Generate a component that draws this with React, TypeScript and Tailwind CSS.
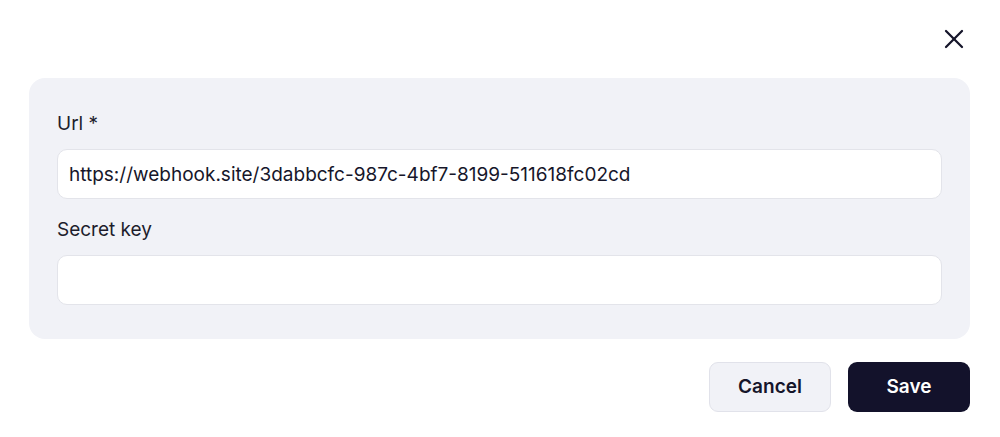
import { X } from "lucide-react";

const Field = ({ label, value }: { label: string; value?: string }) => (
  <div className="flex flex-col">
    <label className="text-[19px] leading-7 text-[#1d1d2c] mb-[11px]">{label}</label>
    <input
      readOnly
      value={value ?? ""}
      className="h-[50px] w-full rounded-[10px] border border-[#e3e4ea] bg-white px-[11px] text-[19px] text-[#16162a] outline-none"
    />
  </div>
);

const App = () => {
  return (
    <div className="h-[437px] w-[1000px] bg-white pl-[29px] pr-[30px] font-['Inter',sans-serif]">
      <div className="flex h-[78px] items-start justify-end pt-[23px] pr-[0px]">
        <X className="h-[32px] w-[32px] text-[#15152a]" strokeWidth={1.7} />
      </div>
      <div className="flex flex-col gap-[17px] rounded-[16px] bg-[#f1f2f7] px-7 pt-8 pb-[34px]">
        <Field label="Url *" value="https://webhook.site/3dabbcfc-987c-4bf7-8199-511618fc02cd" />
        <Field label="Secret key" />
      </div>
      <div className="mt-[23px] flex justify-end gap-[17px]">
        <button className="h-[50px] w-[122px] rounded-[9px] border border-[#e1e2ea] bg-[#f1f2f7] text-[19px] font-semibold text-[#15152a]">
          Cancel
        </button>
        <button className="h-[50px] w-[122px] rounded-[9px] bg-[#13122b] text-[19px] font-semibold text-white">
          Save
        </button>
      </div>
    </div>
  );
};

export default App;
